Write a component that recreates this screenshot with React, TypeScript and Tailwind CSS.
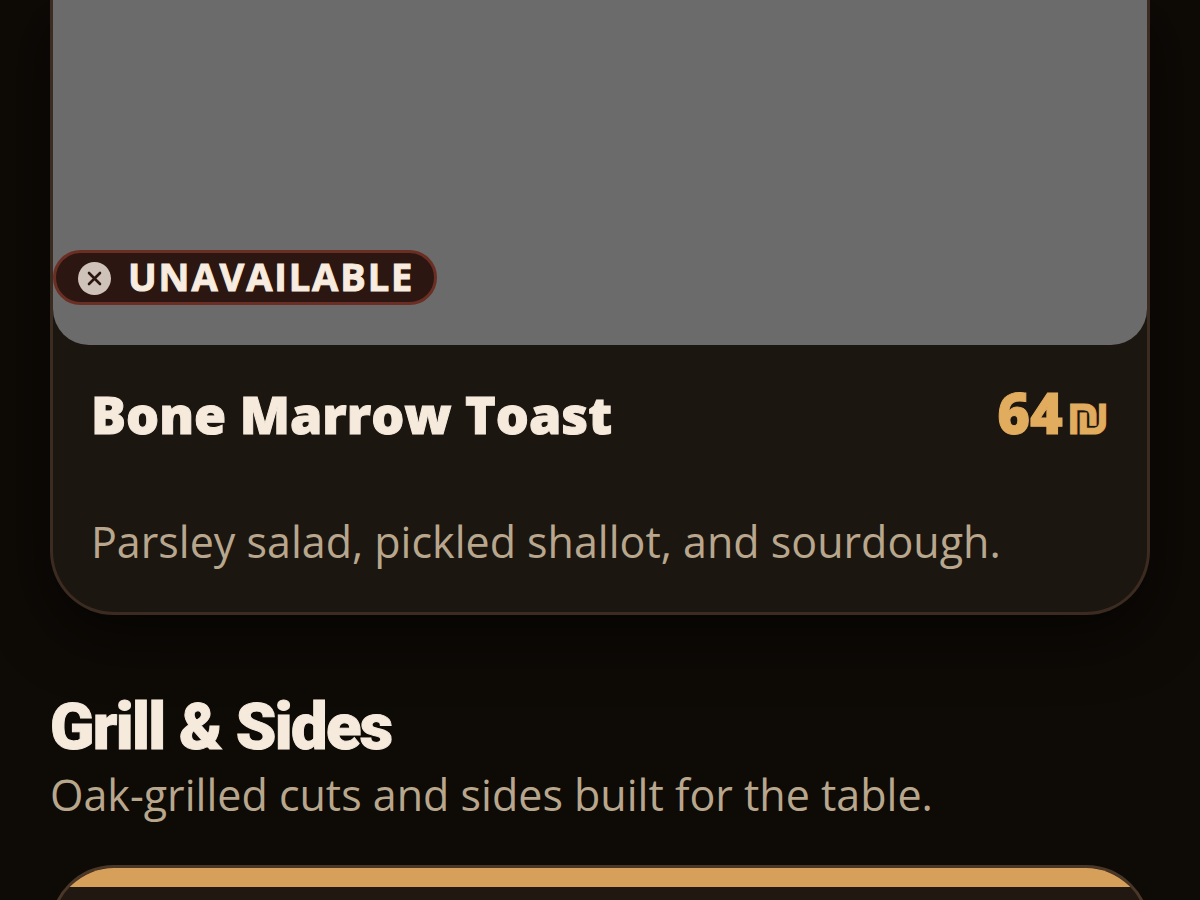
type Dish = {
    name: string
    description: string
    price: number
    available: boolean
}

const dish: Dish = {
    name: "Bone Marrow Toast",
    description: "Parsley salad, pickled shallot, and sourdough.",
    price: 64,
    available: false
}

function UnavailableBadge() {
    return (
        <div className="absolute bottom-10 left-0 flex h-[55px] items-center gap-4 rounded-full border-3 border-[#6b2e24] bg-[#2c1611] pl-[22px] pr-5">
            <svg viewBox="0 0 34 34" className="size-[34px] shrink-0" aria-hidden="true">
                <circle cx="16.5" cy="17.5" r="16.5" fill="#cfc2b8" />
                <path d="M11 12l11 11M22 12l-11 11" stroke="#2c1611" strokeWidth="2.6" strokeLinecap="round" />
            </svg>
            <span className="pb-1 text-[38px] leading-none font-bold tracking-wider text-[#f8ebdf] uppercase [-webkit-text-stroke:1px]">Unavailable</span>
        </div>
    )
}

function DishCard({ item }: { item: Dish }) {
    return (
        <article className="rounded-b-[64px] border-3 border-t-0 border-[#3b2b21] bg-[#1c1611] shadow-[0_20px_60px_rgba(0,0,0,0.6)]">
            {/* PHOTO */}
            <div className="relative h-[345px] rounded-b-[36px] bg-[#6b6b6b]">
                {!item.available && <UnavailableBadge />}
            </div>
            {/* DETAILS */}
            <div className="flex flex-col gap-14 px-[38px] pt-[33px] pb-9">
                <div className="flex items-baseline justify-between">
                    <h3 className="text-[52px] leading-[68px] font-extrabold text-[#f5eadc] [-webkit-text-stroke:1px]">{item.name}</h3>
                    <p className="flex items-baseline gap-1 leading-[68px] font-extrabold text-[#e2ac5e] [-webkit-text-stroke:1px]">
                        <span className="text-[56px]">{item.price}</span>
                        <span className="text-[42px]">₪</span>
                    </p>
                </div>
                <p className="text-[43px] leading-[68px] text-[#b8a78d]">{item.description}</p>
            </div>
        </article>
    )
}

export default function App() {
    return (
        <main className="flex h-screen flex-col overflow-y-hidden bg-[#0e0a06] px-[50px] font-['Open_Sans',sans-serif]">
            <div className="shrink-0">
                <DishCard item={dish} />
            </div>

            <section className="mt-[78px] shrink-0">
                <h2 className="font-['Roboto',sans-serif] text-[65px] leading-[68px] font-black tracking-tight text-[#f5eadc] [-webkit-text-stroke:1px]">Grill &amp; Sides</h2>
                <p className="text-[43px] leading-[68px] text-[#b8a78d]">Oak-grilled cuts and sides built for the table.</p>

                <article className="mt-9 h-[400px] overflow-hidden rounded-[64px] border-3 border-[#4a3728] bg-[#211812]">
                    <div className="h-[19px] bg-[#d6a05a]" />
                </article>
            </section>
        </main>
    )
}
